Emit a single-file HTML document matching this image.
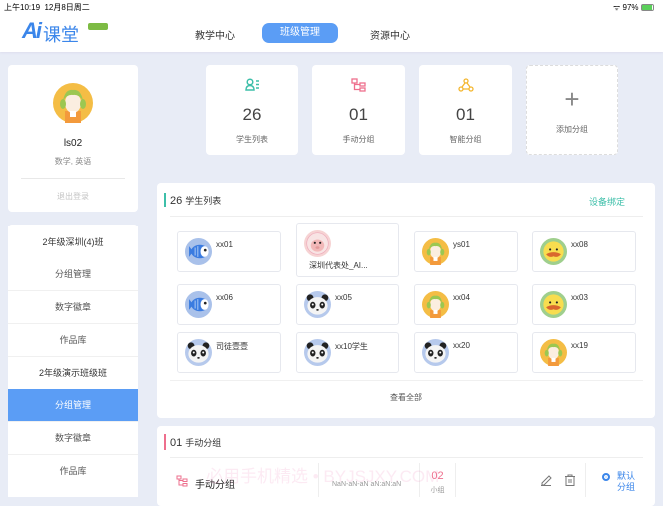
<!DOCTYPE html>
<html><head><meta charset="utf-8"><style>
*{margin:0;padding:0;box-sizing:border-box}
body{width:663px;height:497px;overflow:hidden;background:#e8ecf6;font-family:"Liberation Sans","Noto Sans CJK SC",sans-serif;position:relative;color:#333}
.a{position:absolute}
.card{position:absolute;background:#fff;border-radius:4px}
.t{position:absolute;white-space:nowrap}
.sc{position:absolute;background:#fff;border:1px solid #e6e8ee;border-radius:3px}
.sc .nm{position:absolute;left:38px;top:8px;font-size:8px;color:#333}
.av{position:absolute;left:7px;top:6px;width:27px;height:27px}
.mi{position:absolute;left:8px;width:130px;height:33px;background:#fff;border-top:1px solid #f0f0f0;text-align:center;line-height:32px;font-size:9px;color:#555}
</style></head><body>
<svg width="0" height="0" style="position:absolute"><defs>
<symbol id="girl" viewBox="0 0 40 40"><circle cx="20" cy="20" r="20" fill="#f4bd45"/><rect x="12" y="28" width="16" height="12" fill="#f39a3c"/><ellipse cx="20" cy="20" rx="8" ry="10" fill="#fbeee0"/><path d="M10 18 Q12 6 20 7 Q28 6 30 18 Q26 11 20 12 Q14 11 10 18Z" fill="#9cc751"/><ellipse cx="10" cy="21" rx="3" ry="5" fill="#9cc751"/><ellipse cx="30" cy="21" rx="3" ry="5" fill="#9cc751"/><rect x="17" y="28" width="6" height="6" fill="#fff"/></symbol>
<symbol id="fish" viewBox="0 0 40 40"><circle cx="20" cy="20" r="20" fill="#a9c1ea"/><path d="M6 12 L12 20 L6 28Z" fill="#3a7be0"/><ellipse cx="22" cy="20" rx="13" ry="10" fill="#3a7be0"/><ellipse cx="29" cy="20" rx="6" ry="8" fill="#fff"/><circle cx="30" cy="18" r="2" fill="#222"/><path d="M15 14v12M19 12v16" stroke="#a9c8f5" stroke-width="1.5"/></symbol>
<symbol id="panda" viewBox="0 0 40 40"><circle cx="20" cy="20" r="20" fill="#b6c9ec"/><circle cx="9" cy="10" r="5" fill="#222"/><circle cx="31" cy="10" r="5" fill="#222"/><ellipse cx="20" cy="22" rx="15" ry="13" fill="#f4f4f4"/><ellipse cx="13" cy="21" rx="4" ry="5" fill="#222"/><ellipse cx="27" cy="21" rx="4" ry="5" fill="#222"/><circle cx="13" cy="20" r="1.5" fill="#fff"/><circle cx="27" cy="20" r="1.5" fill="#fff"/><ellipse cx="20" cy="28" rx="2" ry="1.3" fill="#222"/></symbol>
<symbol id="duck" viewBox="0 0 40 40"><circle cx="20" cy="20" r="20" fill="#9fcf8d"/><circle cx="20" cy="20" r="15" fill="#f8dd4f"/><circle cx="15" cy="17" r="1.6" fill="#222"/><circle cx="25" cy="17" r="1.6" fill="#222"/><path d="M9 24 Q20 18 31 24 Q26 30 20 27 Q14 30 9 24Z" fill="#d9672e"/></symbol>
<symbol id="sheep" viewBox="0 0 40 40"><circle cx="20" cy="20" r="20" fill="#f6d3d3"/><circle cx="20" cy="20" r="16" fill="#f8e4e4" stroke="#eab" stroke-width="1"/><ellipse cx="20" cy="23" rx="10" ry="9" fill="#f2b8b8"/><circle cx="16" cy="19" r="1.6" fill="#222"/><circle cx="24" cy="19" r="1.6" fill="#222"/><ellipse cx="20" cy="26" rx="3" ry="2" fill="#e29a9a"/></symbol>
</defs></svg>

<!-- header -->
<div class="a" style="left:0;top:0;width:663px;height:52px;background:#fff;box-shadow:0 1px 2px #dde"></div>
<div class="t" style="left:4px;top:2px;font-size:8px;color:#000">上午10:19&nbsp;&nbsp;12月8日周二</div>
<div class="t" style="left:613px;top:2px;font-size:8px;color:#000">ᯤ 97% <span style="display:inline-block;width:13px;height:7px;border:1px solid #888;border-radius:2px;vertical-align:-1px;background:linear-gradient(90deg,#5bd05b 90%,#fff 90%)"></span></div>
<div class="t" style="left:22px;top:18px;font-size:22px;font-weight:bold;font-style:italic;color:#3b86ea;letter-spacing:-2px">Ai</div>
<div class="t" style="left:43px;top:21px;font-size:18px;color:#3b86ea">课堂</div>
<div class="a" style="left:88px;top:23px;width:20px;height:7px;background:#7dbb44;border-radius:2px"></div>
<div class="t" style="left:195px;top:27px;font-size:10px;color:#333">教学中心</div>
<div class="a" style="left:262px;top:23px;width:76px;height:20px;background:#5b9df5;border-radius:7px;color:#fff;font-size:10px;text-align:center;line-height:20px">班级管理</div>
<div class="t" style="left:370px;top:27px;font-size:10px;color:#333">资源中心</div>

<!-- user card -->
<div class="card" style="left:8px;top:65px;width:130px;height:147px"></div>
<svg class="a" style="left:53px;top:83px" width="40" height="40"><use href="#girl"/></svg>
<div class="t" style="left:8px;top:138px;width:130px;text-align:center;font-size:10px;color:#222">ls02</div>
<div class="t" style="left:8px;top:156px;width:130px;text-align:center;font-size:8px;color:#888">数学, 英语</div>
<div class="a" style="left:21px;top:178px;width:104px;height:1px;background:#e8e8e8"></div>
<div class="t" style="left:8px;top:191px;width:130px;text-align:center;font-size:8px;color:#c4c4c4">退出登录</div>

<!-- menu -->
<div class="card" style="left:8px;top:225px;width:130px;height:272px;border-radius:4px 4px 0 0"></div>
<div class="mi" style="top:226px;border:none;color:#333">2年级深圳(4)班</div>
<div class="mi" style="top:258px;border:none">分组管理</div>
<div class="mi" style="top:290px">数字徽章</div>
<div class="mi" style="top:323px">作品库</div>
<div class="mi" style="top:356px;color:#333">2年级演示班级班</div>
<div class="mi" style="top:389px;background:#5b9df5;color:#fff;border:none">分组管理</div>
<div class="mi" style="top:421px">数字徽章</div>
<div class="mi" style="top:454px">作品库</div>

<!-- stat cards -->
<div class="card" style="left:206px;top:65px;width:92px;height:90px"></div>
<div class="card" style="left:312px;top:65px;width:93px;height:90px"></div>
<div class="card" style="left:419px;top:65px;width:93px;height:90px"></div>
<div class="card" style="left:526px;top:65px;width:92px;height:90px;border:1px dashed #ddd"></div>
<svg class="a" style="left:245px;top:78px" width="16" height="13" fill="none" stroke="#3dbfa9" stroke-width="1.5"><circle cx="5" cy="4" r="2.8"/><path d="M1 12 Q1 7.5 5 7.5 Q9 7.5 9 12Z"/><path d="M11 3h3M11 6.5h3M11 10h3"/></svg>
<svg class="a" style="left:351px;top:78px" width="16" height="14" fill="none" stroke="#ee6f8d" stroke-width="1.3"><rect x="1" y="1" width="5" height="4"/><rect x="9" y="5" width="5" height="3"/><rect x="9" y="10" width="5" height="3"/><path d="M3.5 5v6.5h5.5M3.5 6.5h5.5"/></svg>
<svg class="a" style="left:458px;top:78px" width="16" height="14" fill="none" stroke="#f4b62e" stroke-width="1.3"><circle cx="8" cy="3" r="2"/><circle cx="3" cy="11" r="2"/><circle cx="13" cy="11" r="2"/><path d="M7 5L4 9M9 5l3 4M5 11h6"/></svg>
<div class="t" style="left:206px;top:105px;width:92px;text-align:center;font-size:17px;color:#444">26</div>
<div class="t" style="left:312px;top:105px;width:93px;text-align:center;font-size:17px;color:#444">01</div>
<div class="t" style="left:419px;top:105px;width:93px;text-align:center;font-size:17px;color:#444">01</div>
<div class="t" style="left:206px;top:134px;width:92px;text-align:center;font-size:8px;color:#666">学生列表</div>
<div class="t" style="left:312px;top:134px;width:93px;text-align:center;font-size:8px;color:#666">手动分组</div>
<div class="t" style="left:419px;top:134px;width:93px;text-align:center;font-size:8px;color:#666">智能分组</div>
<div class="t" style="left:526px;top:84px;width:92px;text-align:center;font-size:26px;font-weight:200;color:#888;line-height:30px">+</div>
<div class="t" style="left:526px;top:124px;width:92px;text-align:center;font-size:8px;color:#666">添加分组</div>

<!-- students panel -->
<div class="card" style="left:157px;top:183px;width:498px;height:235px"></div>
<div class="a" style="left:164px;top:193px;width:2px;height:14px;background:#3dbfa9"></div>
<div class="t" style="left:170px;top:194px;font-size:11px;color:#333">26 <span style="font-size:9px">学生列表</span></div>
<div class="t" style="left:589px;top:195px;font-size:9px;color:#3dbfa9">设备绑定</div>
<div class="a" style="left:170px;top:216px;width:473px;height:1px;background:#eee"></div>

<div class="sc" style="left:177px;top:231px;width:104px;height:41px"><svg class="av"><use href="#fish"/></svg><div class="nm">xx01</div></div>
<div class="sc" style="left:296px;top:223px;width:103px;height:54px"><svg class="av"><use href="#sheep"/></svg><div class="nm" style="left:12px;top:36px">深圳代表处_AI...</div></div>
<div class="sc" style="left:414px;top:231px;width:104px;height:41px"><svg class="av"><use href="#girl"/></svg><div class="nm">ys01</div></div>
<div class="sc" style="left:532px;top:231px;width:104px;height:41px"><svg class="av"><use href="#duck"/></svg><div class="nm">xx08</div></div>

<div class="sc" style="left:177px;top:284px;width:104px;height:41px"><svg class="av"><use href="#fish"/></svg><div class="nm">xx06</div></div>
<div class="sc" style="left:296px;top:284px;width:103px;height:41px"><svg class="av"><use href="#panda"/></svg><div class="nm">xx05</div></div>
<div class="sc" style="left:414px;top:284px;width:104px;height:41px"><svg class="av"><use href="#girl"/></svg><div class="nm">xx04</div></div>
<div class="sc" style="left:532px;top:284px;width:104px;height:41px"><svg class="av"><use href="#duck"/></svg><div class="nm">xx03</div></div>

<div class="sc" style="left:177px;top:332px;width:104px;height:41px"><svg class="av"><use href="#panda"/></svg><div class="nm">司徒壹壹</div></div>
<div class="sc" style="left:296px;top:332px;width:103px;height:41px"><svg class="av"><use href="#panda"/></svg><div class="nm">xx10学生</div></div>
<div class="sc" style="left:414px;top:332px;width:104px;height:41px"><svg class="av"><use href="#panda"/></svg><div class="nm">xx20</div></div>
<div class="sc" style="left:532px;top:332px;width:104px;height:41px"><svg class="av"><use href="#girl"/></svg><div class="nm">xx19</div></div>
<div class="a" style="left:170px;top:380px;width:473px;height:1px;background:#f0f0f0"></div>
<div class="t" style="left:157px;top:392px;width:498px;text-align:center;font-size:8px;color:#555">查看全部</div>

<!-- group panel -->
<div class="card" style="left:157px;top:426px;width:498px;height:80px"></div>
<div class="a" style="left:164px;top:434px;width:2px;height:16px;background:#ee6f8d"></div>
<div class="t" style="left:170px;top:436px;font-size:11px;color:#333">01 <span style="font-size:9px">手动分组</span></div>
<div class="a" style="left:170px;top:457px;width:473px;height:1px;background:#eee"></div>
<svg class="a" style="left:176px;top:475px" width="12" height="12" fill="none" stroke="#ee6f8d" stroke-width="1"><rect x="1" y="1" width="4" height="3"/><rect x="7" y="4" width="4" height="2.5"/><rect x="7" y="8.5" width="4" height="2.5"/><path d="M3 4v6h4M3 5.5h4"/></svg>
<div class="t" style="left:195px;top:476px;font-size:10px;color:#222">手动分组</div>
<div class="a" style="left:318px;top:463px;width:1px;height:34px;background:#eee"></div>
<div class="t" style="left:332px;top:481px;font-size:7px;color:#999">NaN-aN-aN aN:aN:aN</div>
<div class="a" style="left:419px;top:463px;width:1px;height:34px;background:#eee"></div>
<div class="a" style="left:455px;top:463px;width:1px;height:34px;background:#eee"></div>
<div class="t" style="left:420px;top:470px;width:35px;text-align:center;font-size:11px;color:#ee6f8d">02</div>
<div class="t" style="left:420px;top:485px;width:35px;text-align:center;font-size:7px;color:#999">小组</div>
<div class="t" style="left:206px;top:462px;font-size:17px;color:rgba(240,140,190,0.18)">必用手机精选 • BYJSJXY.COM</div>
<svg class="a" style="left:540px;top:474px" width="12" height="12" fill="none" stroke="#777" stroke-width="1"><path d="M2 9l7-7 2 2-7 7H2z"/><path d="M1 11.5h10"/></svg>
<svg class="a" style="left:564px;top:474px" width="12" height="12" fill="none" stroke="#777" stroke-width="1"><path d="M1 2.5h10M4 2.5V1h4v1.5M2 2.5v9h8v-9M5 5v4M7 5v4"/></svg>
<div class="a" style="left:585px;top:463px;width:1px;height:34px;background:#eee"></div>
<div class="a" style="left:602px;top:473px;width:8px;height:8px;border-radius:50%;background:#3b86ea;border:2px solid #3b86ea;box-shadow:inset 0 0 0 1.5px #fff"></div>
<div class="t" style="left:617px;top:471px;font-size:9px;color:#3b86ea;line-height:11px">默认<br>分组</div>
</body></html>
